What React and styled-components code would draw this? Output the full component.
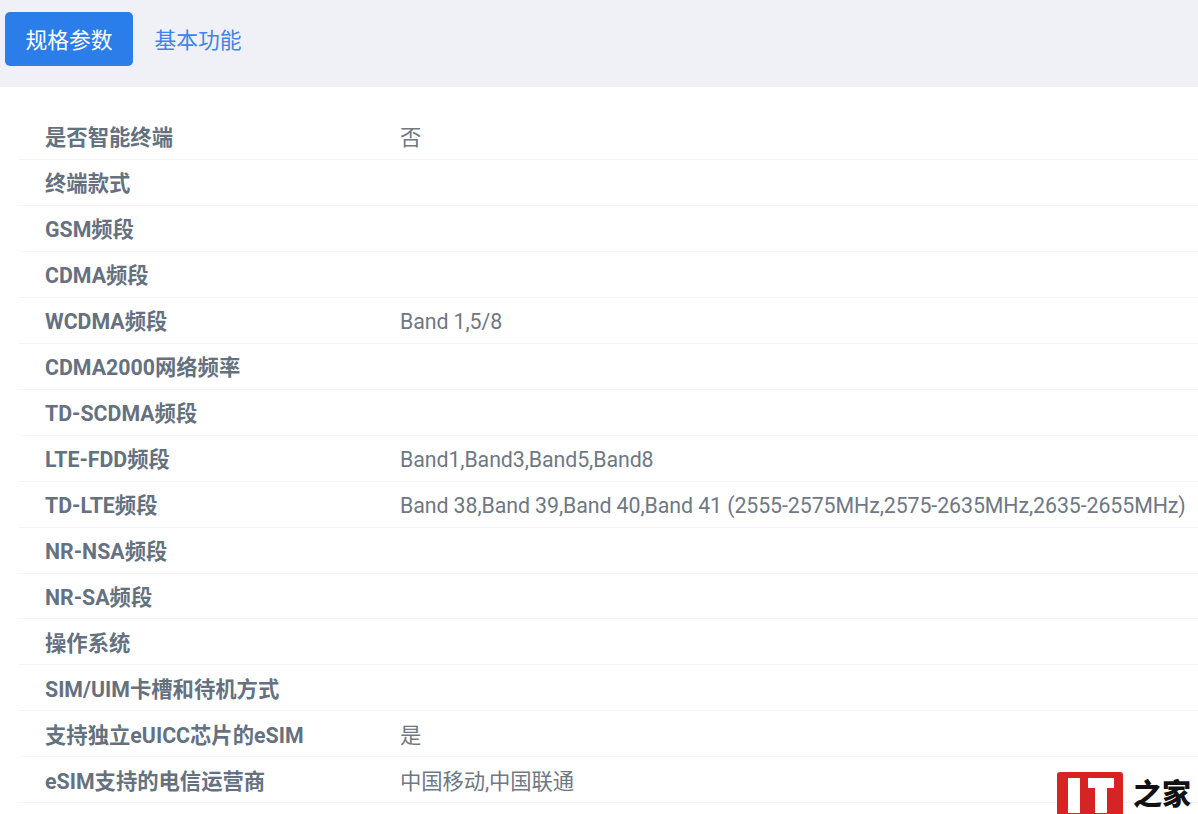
import React from "react";
import styled, { createGlobalStyle } from "styled-components";

const FONT = `Roboto, "Noto Sans CJK SC", sans-serif`;

const Global = createGlobalStyle`
  html, body { margin: 0; padding: 0; background: #fff; height: 100%; overflow: hidden; }
  body { font-family: ${FONT}; }
`;

const Page = styled.div`
  position: relative;
  width: 1198px;
  height: 814px;
  overflow: hidden;
`;

const TabBar = styled.nav`
  display: flex;
  align-items: flex-start;
  height: 87px;
  box-sizing: border-box;
  padding: 12px 0 0 5px;
  background: #f0f1f6;
`;

const Tab = styled.button`
  width: ${(p) => (p.$active ? "128px" : "130px")};
  height: 54px;
  padding: 0;
  border: 0;
  border-radius: 5px;
  font-family: ${FONT};
  font-size: 21.8px;
  line-height: 58px;
  background: ${(p) => (p.$active ? "#2b7de9" : "transparent")};
  color: ${(p) => (p.$active ? "#ffffff" : "#3b86ea")};
  text-align: center;
`;

const Specs = styled.dl`
  margin: 0;
  padding: 27px 0 0 19px;
`;

const Row = styled.div`
  display: flex;
  align-items: center;
  height: 45.96px;
  box-sizing: border-box;
  padding: 3.4px 0 0 26px;
  border-bottom: 1px solid #f3f5fa;
  font-size: 21.33px;
  line-height: 30px;
  white-space: nowrap;
`;

const Label = styled.dt`
  width: 355px;
  flex: none;
  font-weight: 700;
  color: #65717f;
`;

const Value = styled.dd`
  margin: 0;
  color: #6f7883;
  letter-spacing: -0.08px;
`;

const Logo = styled.div`
  position: absolute;
  left: 1057px;
  top: 772px;
  display: flex;
  align-items: flex-start;
  gap: 10px;
`;

const LogoMark = styled.svg`
  display: block;
  width: 66px;
  height: 42px;
`;

const LogoText = styled.span`
  font: 900 29px/40px "Noto Sans CJK SC", sans-serif;
  color: #111;
  white-space: nowrap;
`;

const rows = [
  ["是否智能终端", "否"],
  ["终端款式", ""],
  ["GSM频段", ""],
  ["CDMA频段", ""],
  ["WCDMA频段", "Band 1,5/8"],
  ["CDMA2000网络频率", ""],
  ["TD-SCDMA频段", ""],
  ["LTE-FDD频段", "Band1,Band3,Band5,Band8"],
  ["TD-LTE频段", "Band 38,Band 39,Band 40,Band 41 (2555-2575MHz,2575-2635MHz,2635-2655MHz)"],
  ["NR-NSA频段", ""],
  ["NR-SA频段", ""],
  ["操作系统", ""],
  ["SIM/UIM卡槽和待机方式", ""],
  ["支持独立eUICC芯片的eSIM", "是"],
  ["eSIM支持的电信运营商", "中国移动,中国联通"],
];

export default function App() {
  return (
    <Page>
      <Global />
      <TabBar>
        <Tab $active>规格参数</Tab>
        <Tab>基本功能</Tab>
      </TabBar>
      <Specs>
        {rows.map(([k, v]) => (
          <Row key={k}>
            <Label>{k}</Label>
            <Value>{v}</Value>
          </Row>
        ))}
      </Specs>
      <Logo>
        <LogoMark viewBox="0 0 66 42" role="img" aria-label="IT">
          <path d="M3 0h60a3 3 0 0 1 3 3v39H0V3a3 3 0 0 1 3-3z" fill="#d62323" />
          <path d="M11 6h12v35H11zM31 6h26v10h-7v25H38V16h-7z" fill="#fff" />
        </LogoMark>
        <LogoText>之家</LogoText>
      </Logo>
    </Page>
  );
}
